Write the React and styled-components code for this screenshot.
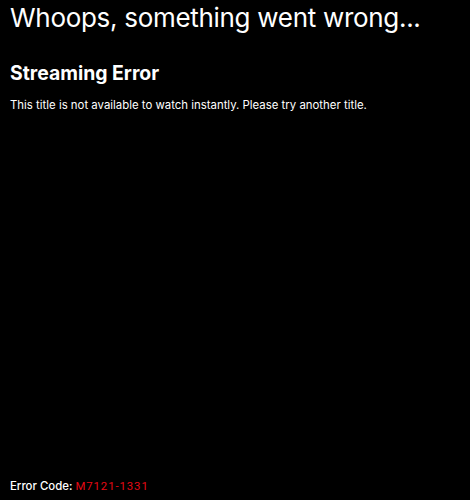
import React from 'react';
import styled, { createGlobalStyle } from 'styled-components';

const GlobalStyle = createGlobalStyle`
  html, body {
    margin: 0;
    padding: 0;
    background: #000;
  }
  body {
    font-family: Inter, "Liberation Sans", sans-serif;
    color: #fff;
  }
`;

const Page = styled.div`
  min-height: 100vh;
  box-sizing: border-box;
  display: flex;
  flex-direction: column;
  padding: 0 10px 6px;
`;

const Title = styled.h1`
  font-size: 26px;
  font-weight: 400;
  line-height: 36px;
  margin: 0;
  letter-spacing: -0.3px;
`;

const Heading = styled.h2`
  font-size: 19.4px;
  font-weight: 700;
  line-height: 26px;
  margin: 24px 0 0;
`;

const Message = styled.p`
  font-size: 11.4px;
  line-height: 16px;
  margin: 11px 0 0;
`;

const Footer = styled.div`
  margin-top: auto;
  font-size: 11.4px;
  font-weight: 500;
  line-height: 16px;
`;

const Code = styled.span`
  color: #e50914;
  font-weight: 400;
  letter-spacing: 0.9px;
  font-family: Roboto, "Liberation Sans", sans-serif;
`;

export default function App() {
  return (
    <>
      <GlobalStyle />
      <Page>
        <Title>Whoops, something went wrong...</Title>
        <Heading>Streaming Error</Heading>
        <Message>This title is not available to watch instantly. Please try another title.</Message>
        <Footer>
          Error Code: <Code>M7121-1331</Code>
        </Footer>
      </Page>
    </>
  );
}
